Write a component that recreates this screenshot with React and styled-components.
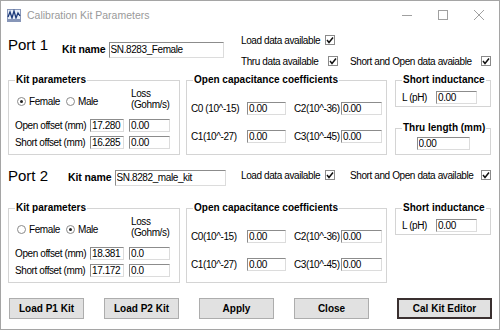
import styled, { createGlobalStyle } from "styled-components";

// ---------------- Global ----------------

const GlobalStyle = createGlobalStyle`
  html, body {
    margin: 0;
    padding: 0;
    background: #ffffff;
  }
  body {
    font-family: "Liberation Sans", Arial, sans-serif;
  }
`;

// ---------------- Window chrome ----------------

const Window = styled.div`
  width: 500px;
  height: 330px;
  box-sizing: border-box;
  border: 1px solid #a5a5a5;
  background: #ffffff;
  display: flex;
  flex-direction: column;
  overflow: hidden;
  font-family: "Liberation Sans", Arial, sans-serif;
  font-size: 10px;
  letter-spacing: -0.4px;
  color: #000;
`;

const TitleBar = styled.div`
  height: 28px;
  display: flex;
  align-items: center;
  padding-left: 6px;
  flex-shrink: 0;
`;

const TitleText = styled.span`
  margin-left: 6px;
  font-size: 10.5px;
  letter-spacing: 0;
  color: #9a9a9a;
`;

const Controls = styled.div`
  margin-left: auto;
  margin-right: 2px;
  display: flex;
`;

const ControlButton = styled.div`
  width: 36px;
  height: 28px;
  display: flex;
  align-items: center;
  justify-content: center;
  color: #a0a0a0;
`;

const Body = styled.div`
  flex: 1;
  display: flex;
  flex-direction: column;
  padding: 0 7px;
`;

// ---------------- Port header ----------------

const PortHeader = styled.div`
  height: ${p => p.$height}px;
  display: flex;
  flex-shrink: 0;
`;

const NameBlock = styled.div`
  width: 233px;
  display: flex;
  align-items: baseline;
  padding-top: ${p => p.$top}px;
  box-sizing: border-box;
  height: fit-content;
`;

const PortTitle = styled.span`
  width: ${p => p.$width}px;
  font-size: 15px;
  letter-spacing: 0;
  position: relative;
  top: ${p => p.$shift || 0}px;
`;

const KitLabel = styled.span`
  font-weight: bold;
  font-size: 10.5px;
  letter-spacing: -0.1px;
  margin-right: 3px;
`;

const TextBox = styled.input`
  box-sizing: border-box;
  width: ${p => p.$width}px;
  height: ${p => p.$height || 13}px;
  margin: 0;
  padding: 0 1px;
  border: 1px solid;
  border-color: #8c8c8c #dcdcdc #dcdcdc #8c8c8c;
  background: #fff;
  font-family: "Liberation Sans", Arial, sans-serif;
  font-size: 10px;
  letter-spacing: -0.4px;
  color: #000;
  outline: none;
`;

const CheckBlock = styled.div`
  display: flex;
  flex-direction: column;
  gap: 7px;
  padding-top: ${p => p.$top}px;
`;

const CheckRow = styled.div`
  display: flex;
  align-items: center;
  height: 14px;
`;

const CheckItem = styled.div`
  display: flex;
  align-items: center;
  width: ${p => (p.$width ? `${p.$width}px` : "auto")};
`;

const CheckText = styled.span`
  width: ${p => p.$width}px;
  white-space: nowrap;
`;

const CheckBoxFrame = styled.span`
  width: 10px;
  height: 10px;
  box-sizing: border-box;
  border: 1px solid #8a8a8a;
  background: #fff;
  display: flex;
  align-items: center;
  justify-content: center;
`;

// ---------------- Group boxes ----------------

const GroupRow = styled.div`
  display: flex;
  gap: 6px;
  flex-shrink: 0;
`;

const GroupBox = styled.fieldset`
  margin: 0;
  padding: 0;
  min-width: 0;
  box-sizing: border-box;
  width: ${p => p.$width}px;
  height: ${p => p.$height}px;
  border: 1px solid #d4d4d4;
`;

const Legend = styled.legend`
  margin-left: 6px;
  padding: 0 1px;
  font-weight: bold;
  font-size: 10px;
  line-height: 14px;
  letter-spacing: 0;
`;

const KitGrid = styled.div`
  display: grid;
  grid-template-columns: 70px 34px 41px;
  grid-template-rows: 27px 13px 13px;
  column-gap: 5px;
  row-gap: 4px;
  padding: 1px 0 0 6px;
`;

const RadioRow = styled.div`
  grid-column: 1 / 3;
  display: flex;
  align-items: center;
  gap: 6px;
  padding: 8px 0 0 2px;
  align-self: start;
`;

const RadioItem = styled.label`
  display: flex;
  align-items: center;
  gap: 3px;
`;

const RadioCircle = styled.span`
  width: 9px;
  height: 9px;
  box-sizing: border-box;
  border-radius: 50%;
  border: 1px solid #8a8a8a;
  background: #fff;
  display: flex;
  align-items: center;
  justify-content: center;

  &::after {
    content: "";
    width: 3px;
    height: 3px;
    border-radius: 50%;
    background: ${p => (p.$checked ? "#222" : "transparent")};
  }
`;

const LossLabel = styled.div`
  padding-left: 2px;
  line-height: 11px;
  align-self: start;
`;

const FieldLabel = styled.span`
  align-self: center;
  white-space: nowrap;
  padding-left: ${p => p.$indent || 0}px;
`;

const CoeffGrid = styled.div`
  display: grid;
  grid-template-columns: 56px 39px 55px 41px;
  grid-template-rows: 13px 13px;
  row-gap: 15px;
  padding: 15px 4px 0 4px;
`;

const SideColumn = styled.div`
  display: flex;
  flex-direction: column;
  gap: 14px;
  margin-left: 2px;
`;

const InductRow = styled.div`
  display: flex;
  align-items: center;
  padding: 4px 0 0 6px;
`;

const InductLabel = styled.span`
  width: 34px;
`;

const ThruRow = styled.div`
  display: flex;
  justify-content: center;
  padding-top: 2px;
`;

// ---------------- Buttons ----------------

const ButtonRow = styled.div`
  display: flex;
  gap: 20px;
  margin-top: 15px;
  padding-left: 1px;
`;

const Button = styled.button`
  box-sizing: border-box;
  width: ${p => p.$width}px;
  height: 21px;
  margin: 0;
  margin-left: ${p => p.$push || 0}px;
  padding: 0;
  background: #e1e1e1;
  border: 1px solid ${p => (p.$default ? "#3a3030" : "#adadad")};
  box-shadow: ${p => (p.$default ? "inset 0 0 0 1px #3a3030" : "none")};
  font-family: "Liberation Sans", Arial, sans-serif;
  font-weight: bold;
  font-size: 10px;
  letter-spacing: 0;
  color: #000;
`;

// ---------------- Small pieces ----------------

const AppIcon = () => (
  <svg width="14" height="13" viewBox="0 0 14 13">
    <rect x="0.5" y="0.5" width="13" height="12" fill="#e6edf7" stroke="#8796b8" />
    <polyline points="1,8 3,3 5,9 7,2 9,9 11,4 13,7" fill="none" stroke="#1d3a7a" strokeWidth="1.3" />
    <rect x="1" y="10" width="12" height="2" fill="#8796b8" />
  </svg>
);

const CheckBox = () => (
  <CheckBoxFrame>
    <svg width="8" height="8" viewBox="0 0 8 8">
      <polyline points="1,4 3,6.5 7,1.5" fill="none" stroke="#111" strokeWidth="1.5" />
    </svg>
  </CheckBoxFrame>
);

const Check = ({ text, labelWidth, width }) => (
  <CheckItem $width={width}>
    <CheckText $width={labelWidth}>{text}</CheckText>
    <CheckBox />
  </CheckItem>
);

const KitParameters = ({ male, open, short, openLoss, shortLoss }) => (
  <GroupBox $width={172} $height={82}>
    <Legend>Kit parameters</Legend>
    <KitGrid>
      <RadioRow>
        <RadioItem>
          <RadioCircle $checked={!male} />
          Female
        </RadioItem>
        <RadioItem>
          <RadioCircle $checked={male} />
          Male
        </RadioItem>
      </RadioRow>
      <LossLabel>
        Loss
        <br />
        (Gohm/s)
      </LossLabel>
      <FieldLabel>Open offset (mm)</FieldLabel>
      <TextBox $width={34} readOnly defaultValue={open} />
      <TextBox $width={41} readOnly defaultValue={openLoss} />
      <FieldLabel>Short offset (mm)</FieldLabel>
      <TextBox $width={34} readOnly defaultValue={short} />
      <TextBox $width={41} readOnly defaultValue={shortLoss} />
    </KitGrid>
  </GroupBox>
);

const OpenCapacitance = ({ c0Label }) => (
  <GroupBox $width={201} $height={82}>
    <Legend>Open capacitance coefficients</Legend>
    <CoeffGrid>
      <FieldLabel>{c0Label}</FieldLabel>
      <TextBox $width={39} readOnly defaultValue="0.00" />
      <FieldLabel $indent={8}>C2(10^-36)</FieldLabel>
      <TextBox $width={41} readOnly defaultValue="0.00" />
      <FieldLabel>C1(10^-27)</FieldLabel>
      <TextBox $width={39} readOnly defaultValue="0.00" />
      <FieldLabel $indent={8}>C3(10^-45)</FieldLabel>
      <TextBox $width={41} readOnly defaultValue="0.00" />
    </CoeffGrid>
  </GroupBox>
);

const ShortInductance = () => (
  <GroupBox $width={96} $height={34}>
    <Legend>Short inductance</Legend>
    <InductRow>
      <InductLabel>L (pH)</InductLabel>
      <TextBox $width={41} readOnly defaultValue="0.00" />
    </InductRow>
  </GroupBox>
);

// ---------------- Main Component ----------------

export default function App() {
  return (
    <>
      <GlobalStyle />
      <Window>
        <TitleBar>
          <AppIcon />
          <TitleText>Calibration Kit Parameters</TitleText>
          <Controls>
            <ControlButton>
              <svg width="10" height="10" viewBox="0 0 10 10">
                <line x1="0" y1="5.5" x2="10" y2="5.5" stroke="currentColor" />
              </svg>
            </ControlButton>
            <ControlButton>
              <svg width="10" height="10" viewBox="0 0 10 10">
                <rect x="0.5" y="0.5" width="9" height="9" fill="none" stroke="currentColor" />
              </svg>
            </ControlButton>
            <ControlButton>
              <svg width="10" height="10" viewBox="0 0 10 10">
                <path d="M0 0 L10 10 M10 0 L0 10" stroke="currentColor" />
              </svg>
            </ControlButton>
          </Controls>
        </TitleBar>

        <Body>
          <PortHeader $height={44}>
            <NameBlock $top={10}>
              <PortTitle $width={54} $shift={-3}>Port 1</PortTitle>
              <KitLabel>Kit name</KitLabel>
              <TextBox $width={115} $height={16} readOnly defaultValue="SN.8283_Female" />
            </NameBlock>
            <CheckBlock $top={4}>
              <CheckRow>
                <Check text="Load data available" labelWidth={84} />
              </CheckRow>
              <CheckRow>
                <Check text="Thru data available" labelWidth={87} width={109} />
                <Check text="Short and Open data avaiable" labelWidth={131} />
              </CheckRow>
            </CheckBlock>
          </PortHeader>

          <GroupRow>
            <KitParameters open="17.280" short="16.285" openLoss="0.00" shortLoss="0.00" />
            <OpenCapacitance c0Label="C0 (10^-15)" />
            <SideColumn>
              <ShortInductance />
              <GroupBox $width={96} $height={34}>
                <Legend>Thru length (mm)</Legend>
                <ThruRow>
                  <TextBox $width={53} readOnly defaultValue="0.00" />
                </ThruRow>
              </GroupBox>
            </SideColumn>
          </GroupRow>

          <PortHeader $height={46}>
            <NameBlock $top={12}>
              <PortTitle $width={60}>Port 2</PortTitle>
              <KitLabel>Kit name</KitLabel>
              <TextBox $width={111} $height={16} readOnly defaultValue="SN.8282_male_kit" />
            </NameBlock>
            <CheckBlock $top={13}>
              <CheckRow>
                <Check text="Load data available" labelWidth={84} width={109} />
                <Check text="Short and Open data available" labelWidth={131} />
              </CheckRow>
            </CheckBlock>
          </PortHeader>

          <GroupRow>
            <KitParameters male open="18.381" short="17.172" openLoss="0.0" shortLoss="0.0" />
            <OpenCapacitance c0Label="C0(10^-15)" />
            <SideColumn>
              <ShortInductance />
            </SideColumn>
          </GroupRow>

          <ButtonRow>
            <Button $width={75}>Load P1 Kit</Button>
            <Button $width={75}>Load P2 Kit</Button>
            <Button $width={75}>Apply</Button>
            <Button $width={75}>Close</Button>
            <Button $width={95} $push={8} $default>
              Cal Kit Editor
            </Button>
          </ButtonRow>
        </Body>
      </Window>
    </>
  );
}
